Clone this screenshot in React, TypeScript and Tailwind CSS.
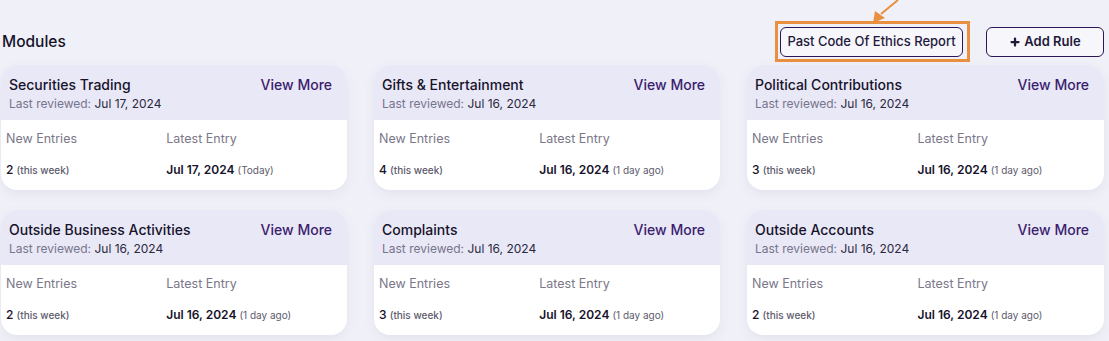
import { Plus } from 'lucide-react';

type Module = {
    name: string;
    reviewed: string;
    count: number;
    latest: string;
    ago: string;
};

const modules: Module[] = [
    { name: 'Securities Trading', reviewed: 'Jul 17, 2024', count: 2, latest: 'Jul 17, 2024', ago: '(Today)' },
    { name: 'Gifts & Entertainment', reviewed: 'Jul 16, 2024', count: 4, latest: 'Jul 16, 2024', ago: '(1 day ago)' },
    { name: 'Political Contributions', reviewed: 'Jul 16, 2024', count: 3, latest: 'Jul 16, 2024', ago: '(1 day ago)' },
    { name: 'Outside Business Activities', reviewed: 'Jul 16, 2024', count: 2, latest: 'Jul 16, 2024', ago: '(1 day ago)' },
    { name: 'Complaints', reviewed: 'Jul 16, 2024', count: 3, latest: 'Jul 16, 2024', ago: '(1 day ago)' },
    { name: 'Outside Accounts', reviewed: 'Jul 16, 2024', count: 2, latest: 'Jul 16, 2024', ago: '(1 day ago)' },
];

function ModuleCard({ m }: { m: Module }) {
    return (
        <div className="h-[125px] rounded-[16px] overflow-hidden bg-white shadow-[0_4px_12px_rgba(40,40,90,0.07)]">
            <div className="h-[55px] bg-[#e9e8f6] pl-[8px] pr-[15px] pt-[10px] flex justify-between">
                <div>
                    <div className="text-[14px] leading-[20px] font-medium text-[#16132b]">{m.name}</div>
                    <div className="text-[12px] leading-[17px] text-[#77758c]">
                        Last reviewed: <span className="text-[#2b2940]">{m.reviewed}</span>
                    </div>
                </div>
                <button className="text-[14px] leading-[20px] font-medium text-[#3b1d6e] h-[20px]">View More</button>
            </div>
            <div className="grid grid-cols-[47.7%_1fr] px-[5px] pt-[10px]">
                <div>
                    <div className="text-[12.5px] leading-[18px] text-[#7a7788]">New Entries</div>
                    <div className="mt-[13px] text-[12px] leading-[18px] font-medium text-[#16132b]">
                        {m.count} <span className="text-[10px] text-[#5d5b6c]">(this week)</span>
                    </div>
                </div>
                <div>
                    <div className="text-[12.5px] leading-[18px] text-[#7a7788]">Latest Entry</div>
                    <div className="mt-[13px] text-[12px] leading-[18px] font-semibold text-[#16132b]">
                        {m.latest} <span className="text-[10px] font-normal text-[#5d5b6c]">{m.ago}</span>
                    </div>
                </div>
            </div>
        </div>
    );
}

export default function App() {
    return (
        <main className="relative min-h-screen bg-[#f0f1f8] font-['Inter',sans-serif]">
            <div className="w-[1104px] pt-[27px] pl-[1px]">
                <div className="flex items-center justify-between h-[30px]">
                    <h1 className="text-[15.5px] font-medium text-[#16132b] pl-[1px]">Modules</h1>
                    <div className="flex items-center gap-[23px]">
                        <div className="relative">
                            <button className="w-[183px] h-[30px] rounded-[6px] border border-[#2c1657] bg-[#f6f6fb] text-[13px] font-medium text-[#1f1a3a]">
                                Past Code Of Ethics Report
                            </button>
                            <div className="absolute -left-[5px] -top-[6px] w-[195px] h-[41px] border-[3px] border-[#e8903f] pointer-events-none" />
                        </div>
                        <button className="w-[118px] h-[30px] rounded-[6px] border border-[#2c1657] bg-[#f6f6fb] text-[13px] font-semibold text-[#1f1a3a] flex items-center justify-center gap-[3px]">
                            <Plus className="w-[12px] h-[12px]" strokeWidth={4.5} />
                            Add Rule
                        </button>
                    </div>
                </div>
                <div className="grid grid-cols-[346px_346px_1fr] gap-x-[27px] gap-y-[20px] mt-[8px]">
                    {modules.map((m) => (
                        <ModuleCard key={m.name} m={m} />
                    ))}
                </div>
            </div>
            <svg className="absolute left-[860px] top-0" width="50" height="26" viewBox="0 0 50 26">
                <line x1="38" y1="0" x2="21" y2="14" stroke="#e8903f" strokeWidth="2" />
                <polygon points="13,23 15,11 25,18" fill="#e8903f" />
            </svg>
        </main>
    );
}
